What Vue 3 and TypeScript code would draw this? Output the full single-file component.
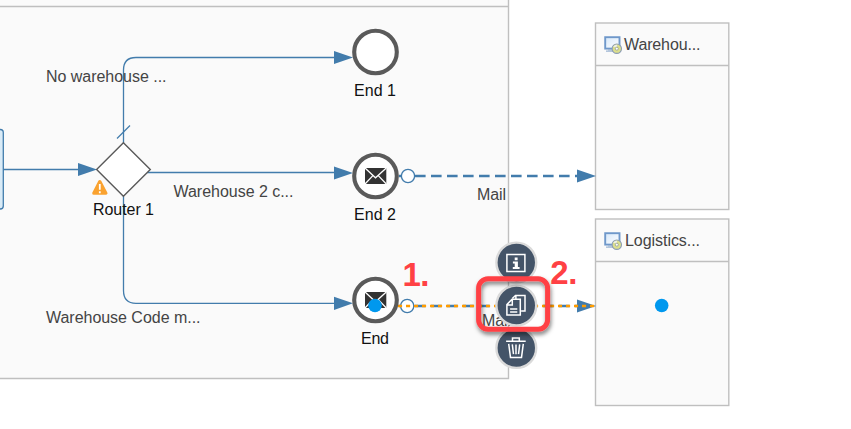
<script setup lang="ts">
interface Label {
  text: string
  x: number
  y: number
  width: number
  strong?: boolean
}

interface Participant {
  name: string
  y: number
  textX: number
  width: number
}

interface EndEvent {
  y: number
  mail: boolean
}

const participants: Participant[] = [
  { name: 'Warehou...', y: 23, textX: 624, width: 76.5 },
  { name: 'Logistics...', y: 219, textX: 625, width: 75 },
]

const endEvents: EndEvent[] = [
  { y: 52, mail: false },
  { y: 176, mail: true },
  { y: 300, mail: true },
]

const labels: Label[] = [
  { text: 'No warehouse ...', x: 46, y: 82, width: 120.5 },
  { text: 'Warehouse 2 c...', x: 173.5, y: 197, width: 120 },
  { text: 'Warehouse Code m...', x: 46, y: 323, width: 154.5 },
  { text: 'Mail', x: 477, y: 200, width: 29 },
  { text: 'Mail', x: 482, y: 326, width: 29 },
  { text: 'Router 1', x: 93, y: 215, width: 61, strong: true },
  { text: 'End 1', x: 354, y: 96, width: 42, strong: true },
  { text: 'End 2', x: 354, y: 220, width: 42, strong: true },
  { text: 'End', x: 361, y: 344, width: 28, strong: true },
]

const arrows: [number, number][] = [
  [97, 169.5],
  [353, 57.5],
  [353, 173],
  [353, 303.3],
  [596, 176],
  [596, 306],
]
</script>

<template>
  <svg class="canvas" width="851" height="429" viewBox="0 0 851 429">
    <defs>
      <filter id="callout-shadow" x="-20%" y="-20%" width="150%" height="150%">
        <feDropShadow dx="1" dy="3" stdDeviation="2.2" flood-color="#000" flood-opacity="0.5" />
      </filter>
      <linearGradient id="screen" x1="0" y1="0" x2="1" y2="1">
        <stop offset="0" stop-color="#d7e8fa" />
        <stop offset="1" stop-color="#ffffff" />
      </linearGradient>
    </defs>

    <!-- process pool -->
    <path class="pool" d="M-5 -5H508.5V378.5H-5Z" />
    <path class="divider" d="M0 6.5H508.5" />
    <rect class="task" x="-20" y="129.5" width="23.3" height="79.5" rx="3" />

    <!-- participants -->
    <g v-for="p in participants" :key="p.name">
      <rect class="participant" x="595.5" :y="p.y" width="133.3" height="186.5" />
      <path class="divider" :d="`M595.5 ${p.y + 42.5}H728.8`" />
      <g :transform="`translate(604 ${p.y + 12.5})`">
        <rect x="1.2" y="1.7" width="14.3" height="11.4" fill="url(#screen)" stroke="#6f98ca" stroke-width="1.9" />
        <path d="M4 14.2H10M2 15.6H9" stroke="#9db5d2" stroke-width="1.1" />
        <circle cx="12.8" cy="13.2" r="4.7" fill="#dcdf8c" stroke="#8d9db3" stroke-width="1.1" />
        <path d="M9.2 11.2A4 4 0 0 1 13.2 9.2L12.8 12.2Z" fill="#eef0e6" />
        <circle cx="12.8" cy="13.2" r="1.5" fill="#fff" stroke="#8f9a94" stroke-width=".8" />
      </g>
    </g>

    <!-- sequence flows -->
    <path class="flow" d="M3 169.5H80" />
    <path class="flow" d="M123.5 143V70Q123.5 57.5 136 57.5H336" />
    <path class="flow" d="M147 172.5H336" />
    <path class="flow" d="M123.5 196V290.5Q123.5 303.3 136 303.3H336" />
    <path class="flow" d="M117 138.5L130 125.5" />

    <!-- message flows -->
    <path class="message" d="M399 176H579" />
    <path class="message" d="M399 306H579" />
    <path
      v-for="([x, y], i) in arrows"
      :key="i"
      class="arrow"
      :d="`M${x} ${y}L${x - 19} ${y - 6.6}V${y + 6.6}Z`"
    />
    <circle class="port" cx="408" cy="176" r="6.6" />
    <circle class="port" cx="407.2" cy="306" r="6.6" />
    <path class="selection" d="M398 306H596" />

    <path class="router" d="M123.4 142.7L150.3 169.5L123.4 196.3L96.6 169.5Z" />
    <path d="M99.8 181.6L105.9 193.2H93.8Z" fill="#faa22f" stroke="#faa22f" stroke-width="3.2" stroke-linejoin="round" />
    <path d="M99.8 184V189.7M99.8 191.2V193.3" stroke="#fff" stroke-width="1.8" />

    <g v-for="e in endEvents" :key="e.y" :transform="`translate(375.5 ${e.y})`">
      <circle class="event" r="21.3" />
      <g v-if="e.mail">
        <rect x="-10.5" y="-8" width="21.3" height="16" fill="#333" />
        <path d="M-10.5 -8L0 1.8L10.8 -8M-10.5 8L-2.6 -.4M10.8 8L2.8 -.4" fill="none" stroke="#fff" stroke-width="1.3" />
      </g>
    </g>

    <text
      v-for="(l, i) in labels"
      :key="i"
      :class="['label', { strong: l.strong }]"
      :x="l.x"
      :y="l.y"
      :textLength="l.width"
    >{{ l.text }}</text>
    <text
      v-for="p in participants"
      :key="p.name"
      class="label"
      :x="p.textX"
      :y="p.y + 27"
      :textLength="p.width"
    >{{ p.name }}</text>

    <circle class="handle" cx="375" cy="305.5" r="6.8" />
    <circle class="handle" cx="661.7" cy="305.5" r="6.8" />

    <!-- context actions -->
    <g transform="translate(516.3 262.5)">
      <circle class="action" r="19.9" />
      <rect class="glyph" x="-9.4" y="-8" width="18" height="17" />
      <path d="M-1.6 -5H1.3V-2.3H-1.6ZM-3.4 -1H1.6V4.6H3.3V6.6H-3.5V4.6H-1.6V.9H-3.4Z" fill="#fff" />
    </g>
    <g transform="translate(516.3 348)">
      <circle class="action" r="19.9" />
      <path class="glyph" d="M-10.2 -6.7H9.4M-3.8 -7.2V-10H3V-7.2M-7.6 -4.2L-5.8 9.4H5.2L7 -4.2M-4 -3.6L-2.8 6.2M-.3 -3.6V6.2M3.4 -3.6L2.2 6.2" />
    </g>
    <g transform="translate(516.3 305.5)">
      <circle class="action" r="19.9" />
      <path class="glyph" d="M-9.4 -1L-4.2 -6.2H4V9.4H-9.4ZM-9.4 -.6H-4V-6M-6.2 3.6H1M-6.2 6.6H1" />
      <path class="glyph" d="M-4 -7L-.8 -10H8.7V5.6H4.8M-.4 -9.6V-6.4" />
    </g>

    <!-- walkthrough annotations -->
    <rect class="callout" x="478.6" y="278.8" width="69" height="50.5" rx="9.5" filter="url(#callout-shadow)" />
    <text class="step" x="402.5" y="286" textLength="27">1.</text>
    <text class="step" x="550.3" y="284" textLength="27">2.</text>
  </svg>
</template>

<style>
body {
  background: #fff;
}
</style>

<style scoped>
.canvas {
  display: block;
  font-family: "Liberation Sans", Arial, sans-serif;
}
.pool,
.participant {
  fill: #fafafa;
  stroke: #bfbfbf;
  stroke-width: 1.4;
}
.divider {
  stroke: #bfbfbf;
  stroke-width: 1.3;
}
.task {
  fill: #d9ebf7;
  stroke: #427cac;
  stroke-width: 1.3;
}
.flow {
  fill: none;
  stroke: #427cac;
  stroke-width: 1.3;
}
.message {
  stroke: #427cac;
  stroke-width: 2.6;
  stroke-dasharray: 10.6 5.4;
}
.selection {
  stroke: #ff9c00;
  stroke-width: 2.6;
  stroke-dasharray: 4.1 3.9;
}
.arrow {
  fill: #427cac;
}
.port {
  fill: #fff;
  stroke: #427cac;
  stroke-width: 1.3;
}
.router {
  fill: #fff;
  stroke: #5a5a5a;
  stroke-width: 1.4;
}
.event {
  fill: #fff;
  stroke: #5a5a5a;
  stroke-width: 4.1;
}
.label {
  font-size: 16px;
  fill: #444;
}
.strong {
  fill: #111;
}
.handle {
  fill: #0098ee;
}
.action {
  fill: #445468;
  stroke: #dadada;
  stroke-width: 2.4;
}
.glyph {
  fill: none;
  stroke: #fff;
  stroke-width: 1.5;
}
.callout {
  fill: none;
  stroke: #ff4144;
  stroke-width: 5;
}
.step {
  font-size: 33px;
  font-weight: bold;
  fill: #ff4144;
}
</style>
